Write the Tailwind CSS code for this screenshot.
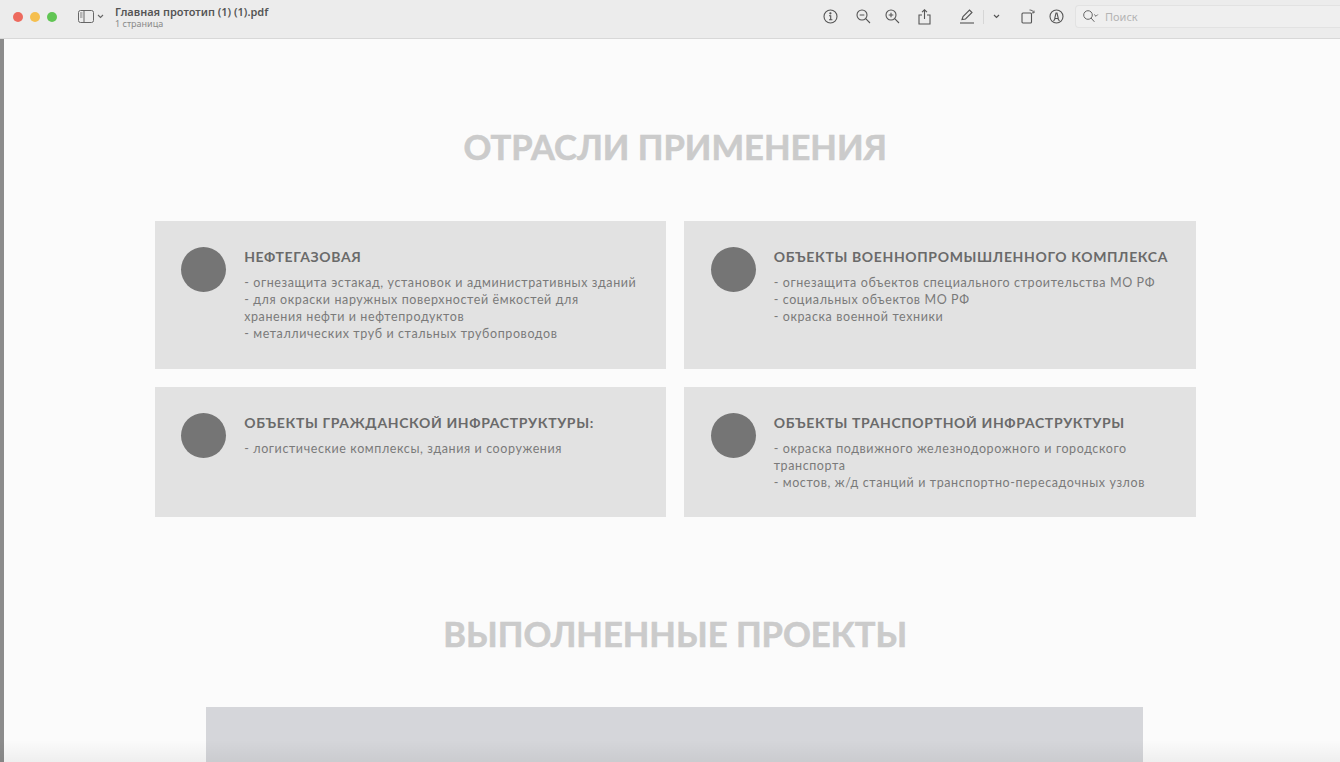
<!DOCTYPE html>
<html lang="ru">
<head>
    <meta charset="UTF-8">
    <meta name="viewport" content="width=device-width, initial-scale=1.0">
    <title>Главная прототип</title>
    <script src="https://cdn.jsdelivr.net/npm/@tailwindcss/browser@4"></script>
</head>
<body class="h-[762px] w-[1340px] overflow-hidden bg-[#fbfbfb] font-['Noto_Sans','Liberation_Sans',sans-serif] relative">
    <!-- Toolbar -->
    <header class="h-[39px] pb-[5px] flex items-center bg-[#ececec] border-b border-[#d8d8d8] text-[#4a4a4a]">
        <div class="flex items-center gap-[7px] pl-[13px]">
            <span class="w-[10px] h-[10px] rounded-full bg-[#ed6a5e]"></span>
            <span class="w-[10px] h-[10px] rounded-full bg-[#f5bf4f]"></span>
            <span class="w-[10px] h-[10px] rounded-full bg-[#61c554]"></span>
        </div>
        <div class="flex items-center ml-[21px] gap-[3px]">
            <svg width="16" height="13" viewBox="0 0 16 13" fill="none" stroke="#666" stroke-width="1"><rect x="0.5" y="0.5" width="15" height="12" rx="2"/><path d="M6 .5v12"/><path d="M2 3h2.5M2 5h2.5M2 7h2.5" stroke-width=".8"/></svg>
            <svg width="7" height="5" viewBox="0 0 7 5" fill="none" stroke="#666" stroke-width="1.1"><path d="M1 1l2.5 2.5L6 1"/></svg>
        </div>
        <div class="ml-[11px] leading-none">
            <div class="text-[11px] font-semibold text-[#555] leading-[13px]">Главная прототип (1) (1).pdf</div>
            <div class="text-[9px] text-[#8a8a8a] leading-[11px]">1 страница</div>
        </div>
        <div class="flex items-center ml-auto">
            <svg class="mr-[18px]" width="15" height="15" viewBox="0 0 15 15" fill="none" stroke="#555" stroke-width="1.1"><circle cx="7.5" cy="7.5" r="6.5"/><path d="M6 6.7h1.7v4M6 10.8h3.4"/><circle cx="7.4" cy="4.3" r=".6" fill="#555"/></svg>
            <svg class="mr-[14px]" width="15" height="15" viewBox="0 0 15 15" fill="none" stroke="#555" stroke-width="1.1"><circle cx="6" cy="6" r="5"/><path d="M3.7 6h4.6M9.7 9.7l4.3 4.3"/></svg>
            <svg class="mr-[18px]" width="15" height="15" viewBox="0 0 15 15" fill="none" stroke="#555" stroke-width="1.1"><circle cx="6" cy="6" r="5"/><path d="M3.7 6h4.6M6 3.7v4.6M9.7 9.7l4.3 4.3"/></svg>
            <svg class="mr-[28px]" width="13" height="16" viewBox="0 0 13 16" fill="none" stroke="#555" stroke-width="1.1"><path d="M4 6H1v9h11V6H9M6.5 10V1M4 3.2L6.5.8 9 3.2"/></svg>
            <svg class="mr-[8px]" width="16" height="15" viewBox="0 0 16 15" fill="none" stroke="#555" stroke-width="1.1"><path d="M3 10.5l1-3L10.5 1l2.5 2.5L6.5 10z"/><path d="M1 14h14"/></svg>
            <span class="w-px h-[14px] bg-[#d6d6d6] mr-[9px]"></span>
            <svg class="mr-[21px]" width="7" height="5" viewBox="0 0 7 5" fill="none" stroke="#555" stroke-width="1.2"><path d="M1 1l2.5 2.5L6 1"/></svg>
            <svg class="mr-[13px]" width="15" height="15" viewBox="0 0 15 15" fill="none" stroke="#555" stroke-width="1.1"><rect x="1" y="4" width="9.5" height="10" rx="1"/><path d="M8.5 1c2 0 3.5 .8 4.5 2.6M13 1.6v2.2h-2" stroke-width=".9"/></svg>
            <svg class="mr-[11px]" width="15" height="15" viewBox="0 0 15 15" fill="none" stroke="#555" stroke-width="1.1"><circle cx="7.5" cy="7.5" r="6.5"/><path d="M4.6 12l1.2-2V9l1.2-5h1l1.2 5v1l1.2 2M5.8 9.5h3.4"/></svg>
            <div class="w-[265px] h-[23px] flex items-center pl-[7px] gap-[6px] bg-[#efefef] border border-[#e2e2e2] border-r-0 rounded-l-[4px]">
                <svg width="16" height="13" viewBox="0 0 16 13" fill="none" stroke="#666" stroke-width="1"><circle cx="5" cy="5" r="4.3"/><path d="M8 8l3.4 3.8M11.2 4.5l1.8 1.8 1.8-1.8"/></svg>
                <span class="text-[11px] text-[#b4b4b4] pt-[1px]">Поиск</span>
            </div>
        </div>
    </header>

    <!-- Document page -->
    <main class="h-[723px] border-l-[4px] border-[#8c8c8c] pl-[150.7px] font-['Lato','Noto_Sans',sans-serif]">
        <h1 class="pt-[88px] w-[1041px] text-center text-[34.5px] leading-[40px] font-bold [-webkit-text-stroke:0.6px_#cbcbcb] text-[#cbcbcb]">ОТРАСЛИ ПРИМЕНЕНИЯ</h1>

        <div class="mt-[54px] grid grid-cols-[511.5px_511.5px] gap-x-[18px] gap-y-[18px] grid-rows-[148px_130px]">
            <section class="bg-[#e2e2e2] flex pt-[26px] pl-[26.5px] gap-[18px]">
                <span class="w-[45px] h-[45px] rounded-full bg-[#757575] shrink-0"></span>
                <div class="pt-[1px]">
                    <h2 class="text-[14px] leading-[18px] font-bold tracking-[0.64px] text-[#6a6a6a]">НЕФТЕГАЗОВАЯ</h2>
                    <p class="mt-[8px] text-[12.5px] leading-[17px] tracking-[0.6px] text-[#7a7a7a]">- огнезащита эстакад, установок и административных зданий<br>- для окраски наружных поверхностей ёмкостей для<br>хранения нефти и нефтепродуктов<br>- металлических труб и стальных трубопроводов</p>
                </div>
            </section>
            <section class="bg-[#e2e2e2] flex pt-[26px] pl-[26.5px] gap-[18px]">
                <span class="w-[45px] h-[45px] rounded-full bg-[#757575] shrink-0"></span>
                <div class="pt-[1px]">
                    <h2 class="text-[14px] leading-[18px] font-bold tracking-[0.64px] text-[#6a6a6a]">ОБЪЕКТЫ ВОЕННОПРОМЫШЛЕННОГО КОМПЛЕКСА</h2>
                    <p class="mt-[8px] text-[12.5px] leading-[17px] tracking-[0.6px] text-[#7a7a7a]">- огнезащита объектов специального строительства МО РФ<br>- социальных объектов МО РФ<br>- окраска военной техники</p>
                </div>
            </section>
            <section class="bg-[#e2e2e2] flex pt-[26px] pl-[26.5px] gap-[18px]">
                <span class="w-[45px] h-[45px] rounded-full bg-[#757575] shrink-0"></span>
                <div class="pt-[1px]">
                    <h2 class="text-[14px] leading-[18px] font-bold tracking-[0.64px] text-[#6a6a6a]">ОБЪЕКТЫ ГРАЖДАНСКОЙ ИНФРАСТРУКТУРЫ:</h2>
                    <p class="mt-[8px] text-[12.5px] leading-[17px] tracking-[0.6px] text-[#7a7a7a]">- логистические комплексы, здания и сооружения</p>
                </div>
            </section>
            <section class="bg-[#e2e2e2] flex pt-[26px] pl-[26.5px] gap-[18px]">
                <span class="w-[45px] h-[45px] rounded-full bg-[#757575] shrink-0"></span>
                <div class="pt-[1px]">
                    <h2 class="text-[14px] leading-[18px] font-bold tracking-[0.64px] text-[#6a6a6a]">ОБЪЕКТЫ ТРАНСПОРТНОЙ ИНФРАСТРУКТУРЫ</h2>
                    <p class="mt-[8px] text-[12.5px] leading-[17px] tracking-[0.6px] text-[#7a7a7a]">- окраска подвижного железнодорожного и городского<br>транспорта<br>- мостов, ж/д станций и транспортно-пересадочных узлов</p>
                </div>
            </section>
        </div>

        <h1 class="mt-[97px] w-[1041px] text-center text-[34.5px] leading-[40px] font-bold [-webkit-text-stroke:0.6px_#cbcbcb] text-[#cbcbcb]">ВЫПОЛНЕННЫЕ ПРОЕКТЫ</h1>
        <div class="mt-[53px] ml-[51.3px] w-[937px] h-[60px] bg-[#d5d6da]"></div>
    </main>

    <!-- Window bottom shadow -->
    <div class="absolute left-0 right-0 bottom-0 h-[22px] bg-gradient-to-b from-black/0 to-black/5"></div>
</body>
</html>
